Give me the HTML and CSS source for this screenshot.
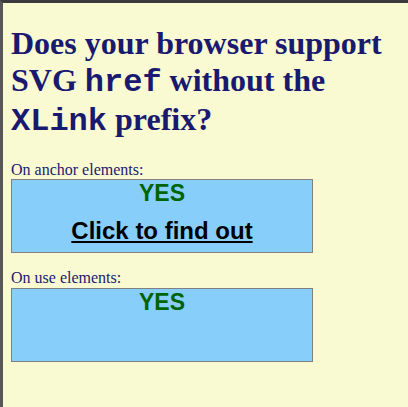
FILE: index.html
```html
<!DOCTYPE html>
<html>
<head>
<meta charset="utf-8">
<link rel="stylesheet" href="styles.css">
</head>
<body>
<h1 class="title">Does your browser support SVG <code class="code">href</code> without the <code class="code">XLink</code> prefix?</h1>
<div class="test">
  <div class="label">On anchor elements:</div>
  <div class="box">
    <div class="yes">YES</div>
    <a class="link" href="#">Click to find out</a>
  </div>
</div>
<div class="test">
  <div class="label">On use elements:</div>
  <div class="box">
    <div class="yes">YES</div>
  </div>
</div>
</body>
</html>
```
FILE: styles.css
```css
html {
  background: #fafad2;
  border-top: 3px solid #3b3b3b;
  border-left: 3px solid #575757;
  min-height: 100%;
  box-sizing: border-box;
}
body {
  margin: 0 8px 8px;
  padding-top: 0.1px;
  font-family: "Liberation Serif", serif;
  font-size: 16px;
  color: #191970;
}
.title {
  font-family: "Liberation Serif", serif;
  font-size: 32px;
  font-weight: bold;
  margin: 21.44px 0;
  color: #191970;
}
.code {
  font-family: "Liberation Mono", "Courier New", monospace;
  font-size: 32px;
  font-weight: bold;
}
.test {
  margin: 16px 0;
}
.title + .test {
  margin-top: 0;
}
.label {
  line-height: 18.4px;
}
.box {
  width: 300px;
  height: 72px;
  background: #87cefa;
  border: 1px solid #808080;
  display: flex;
  flex-direction: column;
  align-items: center;
  font-family: "Liberation Sans", Arial, sans-serif;
  font-weight: bold;
}
.yes {
  color: #006400;
  font-size: 23px;
  line-height: 26px;
  margin-top: 0;
}
.link {
  color: #000;
  font-size: 24px;
  line-height: 28px;
  margin-top: 11px;
  text-decoration: underline;
}
```
